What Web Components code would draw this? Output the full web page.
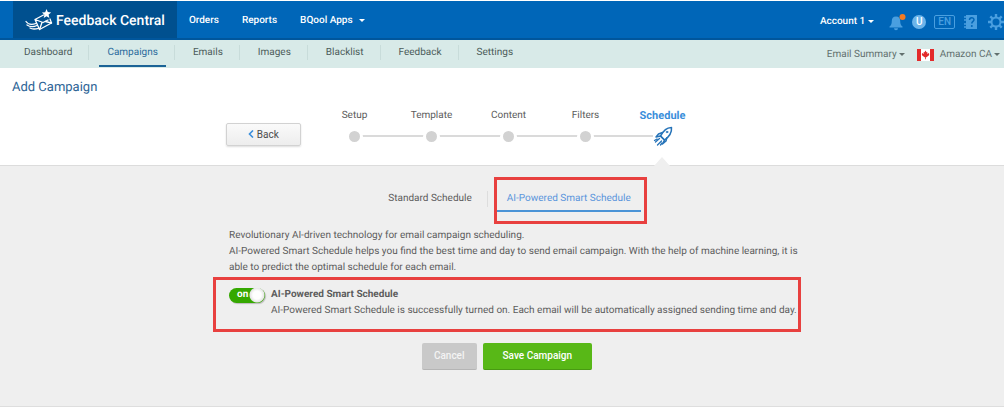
<!DOCTYPE html>
<html lang="en">
<head>
<meta charset="utf-8">
<meta name="viewport" content="width=device-width, initial-scale=1">
<title>Feedback Central</title>
<style>
    body {
        margin: 0;
        background: #fff;
        color: #5c5c5c;
        font: 10px/16px Roboto, "Liberation Sans", sans-serif;
        text-rendering: geometricPrecision;
    }
</style>
</head>
<body>
<campaign-page></campaign-page>

<script>
function define(name, html) {
    const template = document.createElement('template');
    template.innerHTML = html;

    customElements.define(name, class extends HTMLElement {
        constructor() {
            super();

            this.attachShadow({ mode: 'open' });
            this.shadowRoot.appendChild(template.content.cloneNode(true));
        }
    });
}

define('brand-logo', `
    <style>
        :host { display: flex; }

        a {
            display: flex;
            align-items: center;
            gap: 3px;
            padding: 2px 12px 0;
            background: #00508f;
            color: #fff;
            font-size: 14px;
            text-decoration: none;
        }
    </style>
    <a href="#">
        <svg width="28" height="24" viewBox="0 0 28 24" fill="none" stroke="#fff" stroke-width="1.3" stroke-linejoin="round" stroke-linecap="round" aria-hidden="true">
            <path d="M10 10.500 18.500 6M25 10l1.500 4-12 6.500-4.500-10 8 3 5-2.500"/>
            <path d="m14.500 20.500 2.500-7M26.500 14l-6-1.500"/>
            <path d="M1 12.500c2 3 5.500 3.500 10 2M2 16c3 2.200 6.500 2 10 .5M5 19c2.500 1.500 5 1.300 8.500.3"/>
            <path d="m21.500 0 1.300 3.100 3.400.3-2.600 2.200.8 3.300-2.900-1.700-2.800 1.800.7-3.300-2.500-2.100 3.300-.4z" fill="#fff" stroke="none"/>
        </svg>
        <slot></slot>
    </a>
`);

define('caret-link', `
    <style>
        :host { display: block; }

        a {
            display: flex;
            align-items: center;
            gap: var(--caret-gap, 3px);
            color: inherit;
            text-decoration: none;
            white-space: nowrap;
        }

        a::after {
            content: "";
            border: solid transparent;
            border-width: 3px 3px 0;
            border-top-color: currentColor;
        }
    </style>
    <a href="#"><slot></slot></a>
`);

define('tool-icons', `
    <style>
        :host {
            display: flex;
            align-items: center;
            color: #4a9fe0;
        }

        button {
            display: flex;
            padding: 0;
            border: 0;
            background: none;
            color: inherit;
            font: 500 10px/14px Roboto, sans-serif;
        }

        .bell { margin-right: 6px; }

        .user {
            justify-content: center;
            width: 14px;
            border-radius: 50%;
            background: #6bb4ea;
            color: #fff;
            margin-right: 8px;
        }

        .lang {
            padding: 0 3px;
            border: 1px solid;
            border-radius: 2px;
            line-height: 12px;
            margin-right: 9px;
        }

        .help { margin-right: 10px; }
    </style>
    <button class="bell" aria-label="Notifications">
        <svg width="17" height="18" viewBox="0 0 17 18">
            <path d="M7 3.500c-3 0-4.200 2-4.200 4.500 0 3-.8 4.500-2.300 5.500v1h13v-1C12 12.500 11.200 11 11.200 8 11.200 5.500 10 3.500 7 3.500zM5 15.200a2 2 0 0 0 4 0z" fill="currentColor"/>
            <circle cx="13.500" cy="4" r="3" fill="#f47a20"/>
        </svg>
    </button>
    <button class="user">U</button>
    <button class="lang">EN</button>
    <button class="help" aria-label="Help">
        <svg width="14" height="16" viewBox="0 0 14 16">
            <path d="M2 1h11v14H2z" fill="currentColor"/>
            <path d="M0 3h3M0 6h3M0 10h3M0 13h3" stroke="currentColor" stroke-width="1.500"/>
            <path d="M5.500 6c0-3 4.500-3 4.500-.2 0 1.600-2.200 1.700-2.200 3.700" fill="none" stroke="#0066b8" stroke-width="1.500"/>
            <circle cx="7.800" cy="12" r="1" fill="#0066b8"/>
        </svg>
    </button>
    <button aria-label="Settings">
        <svg width="16" height="16" viewBox="0 0 16 16" fill="none" stroke="currentColor">
            <circle cx="8" cy="8" r="4.500" stroke-width="2"/>
            <path d="M8 0v3M8 13v3M0 8h3M13 8h3M2.300 2.300l2.200 2.200M11.500 11.500l2.200 2.200M13.700 2.300l-2.200 2.200M4.500 11.500l-2.200 2.200" stroke-width="2.400"/>
        </svg>
    </button>
`);

define('top-bar', `
    <style>
        :host {
            display: flex;
            height: 39px;
            margin-top: 1px;
            padding-left: 13px;
            overflow: hidden;
            box-sizing: border-box;
            background: #0066b8;
            border-bottom: 2px solid #00569c;
            color: #fff;
            font-size: 10px;
            font-weight: 500;
        }

        nav {
            display: flex;
            align-items: center;
            gap: 23px;
            padding: 2px 0 0 12px;
            --caret-gap: 6px;
        }

        nav a {
            color: inherit;
            text-decoration: none;
        }

        .account {
            display: flex;
            align-items: center;
            gap: 15px;
            margin-left: auto;
            padding-top: 4px;
        }
    </style>
    <brand-logo>Feedback Central</brand-logo>
    <nav>
        <a href="#">Orders</a>
        <a href="#">Reports</a>
        <caret-link>BQool Apps</caret-link>
    </nav>
    <div class="account">
        <caret-link>Account 1</caret-link>
        <tool-icons></tool-icons>
    </div>
`);

define('nav-item', `
    <style>
        :host {
            display: flex;
            padding: 0 9px 0 10px;
            background: linear-gradient(#c8dcda, #c8dcda) right 5px / 1px 15px no-repeat;
        }

        :host(:last-of-type) { background: none; }

        a {
            padding: 5px 8px 0;
            border-bottom: 2px solid transparent;
            color: #4c5c5a;
            text-decoration: none;
        }

        :host([active]) a {
            border-color: #1b6396;
            color: #2a6a9c;
        }
    </style>
    <a href="#"><slot></slot></a>
`);

define('sub-nav', `
    <style>
        :host {
            display: flex;
            justify-content: space-between;
            height: 28px;
            box-sizing: border-box;
            padding: 0 4px 1px 6px;
            background: #d8eae8;
        }

        nav { display: flex; }

        .filters {
            display: flex;
            align-items: center;
            padding-top: 2px;
            color: #62706e;
            --caret-gap: 2px;
        }

        svg { margin: 0 6px 0 12px; }
    </style>
    <nav>
        <nav-item>Dashboard</nav-item>
        <nav-item active>Campaigns</nav-item>
        <nav-item>Emails</nav-item>
        <nav-item>Images</nav-item>
        <nav-item>Blacklist</nav-item>
        <nav-item>Feedback</nav-item>
        <nav-item>Settings</nav-item>
    </nav>
    <div class="filters">
        <caret-link>Email Summary</caret-link>
        <svg width="17" height="12" viewBox="0 0 17 12" aria-hidden="true">
            <path d="M0 0h17v12H0z" fill="#fff"/>
            <path d="M0 0h4v12H0zM13 0h4v12h-4z" fill="#e32b2b"/>
            <path d="m8.500 1.500 1 1.800.9-.4-.3 2.200 1.300-1 .9 1-.5 1.400-2.400 1.800H8.900v2h-.8v-2H7.600L5.200 6.500l-.5-1.400.9-1 1.300 1-.3-2.200.9.400z" fill="#e32b2b"/>
        </svg>
        <caret-link>Amazon CA</caret-link>
    </div>
`);

define('progress-step', `
    <style>
        :host {
            display: flex;
            flex-direction: column;
            align-items: center;
            gap: 7px;
            width: 77px;
            line-height: 14px;
        }

        .track {
            display: flex;
            align-items: center;
            justify-content: center;
            width: 100%;
            height: 12px;
            background: linear-gradient(#dadada, #dadada) center / 100% 2px no-repeat;
        }

        :host([first]) .track {
            background-position: right center;
            background-size: 50% 2px;
        }

        :host([active]) .track {
            background-position: left center;
            background-size: 38% 2px;
        }

        i {
            width: 11px;
            height: 11px;
            border: 3px solid #fff;
            border-radius: 50%;
            background: #d2d2d2;
        }

        svg { display: none; }

        :host([active]) {
            color: #3a8edb;
            font-size: 11px;
            font-weight: 700;
        }

        :host([active]) i { display: none; }

        :host([active]) svg {
            display: block;
            flex: none;
        }
    </style>
    <slot></slot>
    <div class="track">
        <i></i>
        <svg width="20" height="20" viewBox="0 0 20 20" fill="none" stroke="#2673b8" stroke-width="1.500" stroke-linejoin="round" stroke-linecap="round" aria-hidden="true">
            <path d="M18.500 1.500c-5 .2-7.500 2.500-11 8.500l4 4c5-3.500 7.500-7 7-12.500z"/>
            <path d="M9.500 6.500 5.500 8 3 11l4.500-1M13.800 11.800 13 15l-3.500 3 2-4M7.500 10l4 4"/>
            <path d="m6.500 12.500-4 3.500M8.500 15l-4 4M4 13l-2.500 1.500M9 17l-1.500 2" stroke-width="1.300"/>
            <circle cx="14" cy="6" r=".8" stroke-width="1"/>
        </svg>
    </div>
`);

define('wizard-header', `
    <style>
        :host {
            display: block;
            height: 98px;
            box-sizing: border-box;
            padding-top: 11px;
            border-bottom: 1px solid #dcdcdc;
        }

        h1 {
            margin: 0;
            padding-left: 12px;
            color: #2d6496;
            font-size: 13px;
            font-weight: 400;
            line-height: 18px;
        }

        .wizard {
            display: flex;
            align-items: flex-end;
            max-width: 586px;
            margin: 12px auto 0;
            padding-left: 8px;
        }

        button {
            width: 75px;
            height: 23px;
            margin: 0 15px -4px 13px;
            padding: 0;
            border: 1px solid #d2d2d2;
            border-radius: 2px;
            background: linear-gradient(#fafafa, #ededed);
            box-shadow: 0 1px 2px #ddd;
            color: #4c4c4c;
            font: inherit;
        }

        .steps { display: flex; }
    </style>
    <h1>Add Campaign</h1>
    <div class="wizard">
        <button>
            <svg width="6" height="8" viewBox="0 0 6 8" fill="none" stroke="#3a8edb" stroke-width="1.600" aria-hidden="true"><path d="M5 .5 1.500 4 5 7.500"/></svg>
            Back
        </button>
        <div class="steps">
            <progress-step first>Setup</progress-step>
            <progress-step>Template</progress-step>
            <progress-step>Content</progress-step>
            <progress-step>Filters</progress-step>
            <progress-step active>Schedule</progress-step>
        </div>
    </div>
`);

define('highlight-box', `
    <style>
        :host {
            display: block;
            border: 3px solid #e8403f;
        }
    </style>
    <slot></slot>
`);

define('schedule-tabs', `
    <style>
        :host {
            display: flex;
            justify-content: center;
        }

        a {
            color: #5c5c5c;
            text-decoration: none;
        }

        .standard {
            margin: 14px 6px 10px 21px;
            padding-right: 15px;
            border-right: 1px solid #ddd;
            align-self: flex-start;
        }

        .smart {
            display: block;
            margin: 10px 3px 9px 0;
            padding: 1px 10px 3px;
            border-bottom: 2px solid #4a93d6;
            color: #5a95dc;
        }
    </style>
    <a class="standard" href="#">Standard Schedule</a>
    <highlight-box><a class="smart" href="#">AI-Powered Smart Schedule</a></highlight-box>
`);

define('toggle-switch', `
    <style>
        :host {
            display: flex;
            gap: 6px;
        }

        .switch {
            display: grid;
            align-items: center;
            flex: none;
            width: 36px;
            height: 15px;
        }

        input, span { grid-area: 1 / 1; }

        input {
            appearance: none;
            width: 36px;
            height: 15px;
            margin: 0;
            border-radius: 8px;
            background: radial-gradient(circle at 28px 7px, #fff 4px, #e6e6e6 7px, transparent 8px) no-repeat, #35a800;
            box-shadow: 1px 1px 1px #bbb;
        }

        input:not(:checked) { background: #bbb; }

        span {
            z-index: 1;
            padding-left: 8px;
            color: #fff;
            font-weight: 700;
            pointer-events: none;
        }

        label {
            display: block;
            font-weight: 700;
        }

        p { margin: 0; }
    </style>
    <div class="switch">
        <input id="toggle" type="checkbox" role="switch" checked>
        <span aria-hidden="true">on</span>
    </div>
    <div>
        <label for="toggle"><slot name="label"></slot></label>
        <p><slot></slot></p>
    </div>
`);

define('action-button', `
    <style>
        :host { display: block; }

        button {
            height: 27px;
            padding: 0 12px;
            border: 0;
            border-bottom: 1px solid #b5b5b5;
            border-radius: 2px;
            background: #c9c9c9;
            color: #f4f4f4;
            font: inherit;
            font-weight: 500;
        }

        :host([primary]) button {
            padding: 0 20px;
            border-color: #489a12;
            background: #58b817;
            color: #fff;
        }
    </style>
    <button><slot></slot></button>
`);

define('schedule-panel', `
    <style>
        :host {
            display: block;
            padding: 11px 0 36px 10px;
            background: #efefef;
            border-bottom: 1px solid #dedede;
            position: relative;
        }

        /* pointer under the active step */
        .arrow {
            position: absolute;
            top: -9px;
            left: calc(50% + 152px);
            border: 8px solid transparent;
            border-width: 0 8px 9px;
            border-bottom-color: #efefef;
        }

        .content {
            max-width: 588px;
            margin: 0 auto;
        }

        .intro {
            margin: 4px 0 1px 16px;
        }

        toggle-switch { padding: 7px 0 10px 13px; }

        .actions {
            display: flex;
            justify-content: center;
            gap: 6px;
            margin-top: 11px;
        }
    </style>
    <div class="arrow"></div>
    <div class="content">
        <schedule-tabs></schedule-tabs>
        <p class="intro">Revolutionary AI-driven technology for email campaign scheduling.<br>AI-Powered Smart Schedule helps you find the best time and day to send email campaign. With the help of machine learning, it is able to predict the optimal schedule for each email.</p>
        <highlight-box>
            <toggle-switch>
                <span slot="label">AI-Powered Smart Schedule</span>
                AI-Powered Smart Schedule is successfully turned on. Each email will be automatically assigned sending time and day.
            </toggle-switch>
        </highlight-box>
        <div class="actions">
            <action-button>Cancel</action-button>
            <action-button primary>Save Campaign</action-button>
        </div>
    </div>
`);

define('campaign-page', `
    <style>
        :host { display: flow-root; }
    </style>
    <top-bar></top-bar>
    <sub-nav></sub-nav>
    <main>
        <wizard-header></wizard-header>
        <schedule-panel></schedule-panel>
    </main>
`);
</script>
</body>
</html>
